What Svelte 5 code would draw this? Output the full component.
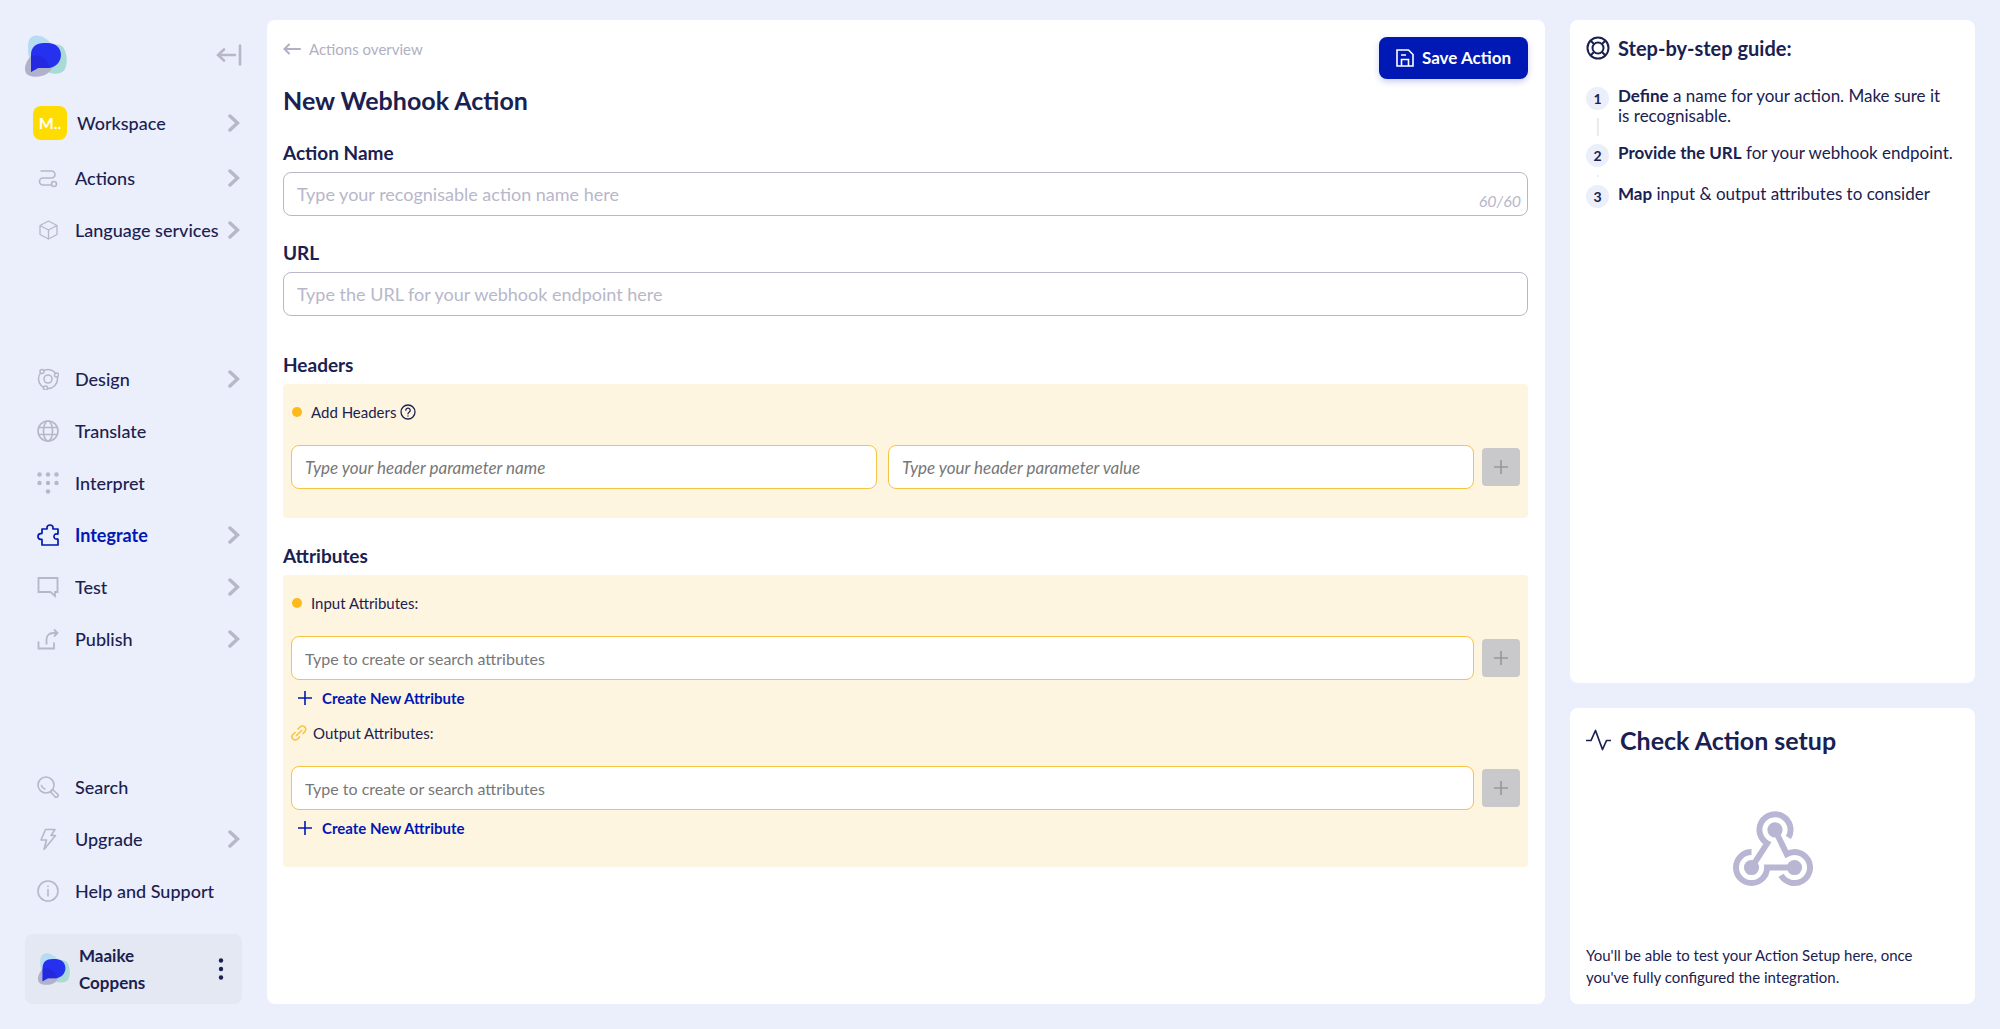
<script lang="ts">
	type NavItem = { label: string; icon: string; expandable?: boolean; active?: boolean };

	const topNav: NavItem[] = [
		{ label: "Actions", icon: "route", expandable: true },
		{ label: "Language services", icon: "cube", expandable: true },
	];
	const mainNav: NavItem[] = [
		{ label: "Design", icon: "orbit", expandable: true },
		{ label: "Translate", icon: "globe" },
		{ label: "Interpret", icon: "dots" },
		{ label: "Integrate", icon: "puzzle", expandable: true, active: true },
		{ label: "Test", icon: "chat", expandable: true },
		{ label: "Publish", icon: "share", expandable: true },
	];
	const bottomNav: NavItem[] = [
		{ label: "Search", icon: "search" },
		{ label: "Upgrade", icon: "bolt", expandable: true },
		{ label: "Help and Support", icon: "info" },
	];
	const steps = [
		{ strong: "Define", text: "a name for your action. Make sure it is\u00a0recognisable." },
		{ strong: "Provide the URL", text: "for your webhook endpoint." },
		{ strong: "Map", text: "input & output attributes to consider" },
	];

	const maxName = 60;
	let name = $state("");
	let url = $state("");
	let headerName = $state("");
	let headerValue = $state("");
	let inputAttr = $state("");
	let outputAttr = $state("");
	let remaining = $derived(maxName - name.length);
</script>

{#snippet logo(size: number)}
	<svg width={size} height={size} viewBox="0 0 42 42" aria-hidden="true">
		<path d="M3 11C3 3 8-1 15 1c8 2 15 10 13 18-2 7-20 10-24 3C3 19 3 15 3 11z" fill="#b5dcf2" />
		<path d="M22 14c3-5 12-6 16-2 4 5 5 16 2 22-2 5-12 6-17 3-5-4-5-17-1-23z" fill="#a9dad8" />
		<path d="M6 21c-4 4-8 12-5 17 3 5 16 5 22 0 5-4 6-11 3-14-4-4-15-7-20-3z" fill="#b0b1cb" />
		<path d="M6 37V20C6 12 11 8 19 8h4c8 0 13 5 13 12s-6 13-13 13H13z" fill="#2531ee" />
		<path d="M6 33V21c7-3 17 2 19 12H13l-7 4z" fill="#2424d6" opacity=".6" />
	</svg>
{/snippet}

{#snippet icon(kind: string)}
	<svg class="icon" width="22" height="22" viewBox="0 0 22 22" fill="none" stroke="currentColor" stroke-width="1.6" stroke-linejoin="round" stroke-linecap="round" aria-hidden="true">
		{#if kind === "route"}
			<path d="M4 4h10.500a3 3 0 0 1 0 7H6a3.500 3.500 0 0 0 0 7h8" />
			<circle cx="17" cy="17" r="2.5" />
		{:else if kind === "cube"}
			<path d="M11.500 2l8.500 4.500v9L11.500 20 3 15.500v-9zM3 6.500l8.500 4.500L20 6.500M11.500 11v9" stroke-width="1.3" />
		{:else if kind === "orbit"}
			<circle cx="11" cy="11" r="9.5" />
			<circle cx="11" cy="11" r="4" />
			<circle class="moon" cx="5" cy="3.5" r="2" />
			<circle class="moon" cx="19.5" cy="7" r="2" />
			<circle class="moon" cx="8.5" cy="20" r="2" />
		{:else if kind === "globe"}
			<circle cx="11" cy="11" r="10" />
			<ellipse cx="11" cy="11" rx="4.5" ry="10" />
			<path d="M2 7.500h18M2 14.500h18" />
		{:else if kind === "dots"}
			<g fill="currentColor" stroke="none">
				<circle cx="2.5" cy="2.5" r="2.2" /><circle cx="11" cy="2.5" r="2.2" /><circle cx="19.5" cy="2.5" r="2.2" />
				<circle cx="2.5" cy="11" r="2.2" /><circle cx="11" cy="11" r="2.2" /><circle cx="19.5" cy="11" r="2.2" />
				<circle cx="11" cy="19.5" r="2.2" />
			</g>
		{:else if kind === "puzzle"}
			<path d="M5 5h4.500c.8 0 .6-.6.5-1.200C9.800 2.300 11 1 13 1s3.200 1.300 3 2.800c-.1.600-.3 1.200.5 1.200H21v4.500c0 .7-.5.700-1.200.5-1.700-.3-2.800.8-2.800 2.500s1.100 2.800 2.800 2.500c.7-.1 1.200-.1 1.200.5v5.500H5v-5c0-.8-.5-.7-1.200-.7C2 15.300 1 14.200 1 12.500s1-2.800 2.800-2.800c.700 0 1.200 0 1.200-.700z" stroke-width="1.7" />
		{:else if kind === "chat"}
			<path d="M1.500 2h19v14H18v4l-4.500-4h-12z" stroke-width="1.8" stroke-linejoin="miter" />
		{:else if kind === "share"}
			<path d="M1.500 13.500v7H17v-6M9.500 16.500V12c0-4 2-7 7-7h4M17 1.500L20.500 5 17 8.500" stroke-width="1.8" stroke-linecap="butt" stroke-linejoin="miter" />
		{:else if kind === "search"}
			<circle cx="9" cy="9" r="8" />
			<path d="M4.500 9.500A4.800 4.800 0 0 0 8 13" />
			<path d="M15.500 13.500l5 4.500a1.800 1.800 0 0 1-2.500 2.700l-4.500-5z" />
		{:else if kind === "bolt"}
			<path d="M8.500 1.500H18l-4 6h4.500L7 21.500l2.500-9.500H4z" />
		{:else if kind === "info"}
			<circle cx="11" cy="11" r="10" />
			<path d="M11 9.500V16M11 6v.5" />
		{/if}
	</svg>
{/snippet}

{#snippet chevron()}
	<svg class="chevron" width="12" height="18" viewBox="0 0 12 18" fill="none" stroke="currentColor" stroke-width="3.5" aria-hidden="true">
		<path d="M2 2l7.500 7L2 16" stroke-linecap="round" />
	</svg>
{/snippet}

{#snippet plus(size: number)}
	<svg width={size} height={size} viewBox="0 0 16 16" fill="none" stroke="currentColor" stroke-width="1.6" aria-hidden="true">
		<path d="M8 1v14M1 8h14" />
	</svg>
{/snippet}

{#snippet navList(items: NavItem[])}
	{#each items as item}
		<a class="nav-item" class:active={item.active} href="#{item.icon}">
			{@render icon(item.icon)}
			<span class="nav-label">{item.label}</span>
			{#if item.expandable}{@render chevron()}{/if}
		</a>
	{/each}
{/snippet}

<div class="app">
	<aside class="sidebar">
		<div class="brand">
			{@render logo(42)}
			<button class="collapse" aria-label="Collapse menu">
				<svg width="26" height="22" viewBox="0 0 26 22" fill="none" stroke="currentColor" stroke-width="2.6" stroke-linecap="round" aria-hidden="true">
					<path d="M19 11H2M8 5.500L2 11l6 5.500M24 1.500v19" />
				</svg>
			</button>
		</div>
		<nav class="nav-group">
			<a class="nav-item workspace" href="#workspace">
				<span class="badge">M..</span>
				<span class="nav-label">Workspace</span>
				{@render chevron()}
			</a>
			{@render navList(topNav)}
		</nav>
		<nav class="nav-group spaced">{@render navList(mainNav)}</nav>
		<nav class="nav-group spaced">{@render navList(bottomNav)}</nav>
		<div class="profile">
			{@render logo(32)}
			<span class="profile-name">Maaike Coppens</span>
			<button class="more" aria-label="Account menu">
				<svg width="6" height="22" viewBox="0 0 6 22" fill="currentColor" aria-hidden="true">
					<circle cx="3" cy="2.5" r="2.2" /><circle cx="3" cy="11" r="2.2" /><circle cx="3" cy="19.5" r="2.2" />
				</svg>
			</button>
		</div>
	</aside>

	<main class="card editor">
		<header class="editor-head">
			<div>
				<a class="back" href="#actions">
					<svg width="18" height="12" viewBox="0 0 18 12" fill="none" stroke="currentColor" stroke-width="2" stroke-linecap="round" aria-hidden="true">
						<path d="M17 6H2M6 1.500L1.500 6 6 10.500" />
					</svg>
					Actions overview
				</a>
				<h1>New Webhook Action</h1>
			</div>
			<button class="save">
				<svg width="18" height="18" viewBox="0 0 18 18" fill="none" stroke="currentColor" stroke-width="1.6" aria-hidden="true">
					<path d="M1 1h11.500L17 5.500V17H1zM5.500 17v-6.500h7V17M5 6h5" />
				</svg>
				Save Action
			</button>
		</header>

		<div class="field">
			<label for="action-name">Action Name</label>
			<div class="counted">
				<input id="action-name" class="text-input" maxlength={maxName} placeholder="Type your recognisable action name here" bind:value={name} />
				<span class="counter">{remaining}/{maxName}</span>
			</div>
		</div>
		<div class="field">
			<label for="action-url">URL</label>
			<input id="action-url" class="text-input" placeholder="Type the URL for your webhook endpoint here" bind:value={url} />
		</div>

		<section class="group headers">
			<h2>Headers</h2>
			<div class="panel">
				<div class="panel-label">
					<span class="dot"></span>
					<span>Add Headers</span>
					<svg class="help" width="16" height="16" viewBox="0 0 16 16" fill="none" stroke="currentColor" stroke-width="1.3" stroke-linecap="round" aria-hidden="true">
						<circle cx="8" cy="8" r="7" />
						<path d="M5.800 6.300a2.200 2.200 0 1 1 3.300 1.900C8.300 8.700 8 9 8 9.800M8 12v.1" />
					</svg>
				</div>
				<div class="row">
					<div class="pair">
						<input class="text-input amber slanted" aria-label="Header name" placeholder="Type your header parameter name" bind:value={headerName} />
						<input class="text-input amber slanted" aria-label="Header value" placeholder="Type your header parameter value" bind:value={headerValue} />
					</div>
					<button class="add" aria-label="Add header" disabled>{@render plus(16)}</button>
				</div>
			</div>
		</section>

		<section class="group">
			<h2>Attributes</h2>
			<div class="panel">
				<label class="panel-label" for="input-attr">
					<span class="dot"></span>
					<span>Input Attributes:</span>
				</label>
				<div class="row">
					<input id="input-attr" class="text-input amber" placeholder="Type to create or search attributes" bind:value={inputAttr} />
					<button class="add" aria-label="Add input attribute" disabled>{@render plus(16)}</button>
				</div>
				<button class="create">{@render plus(16)}Create New Attribute</button>
				<label class="panel-label output" for="output-attr">
					<svg width="16" height="16" viewBox="0 0 16 16" fill="none" stroke="#f8c646" stroke-width="1.7" stroke-linecap="round" aria-hidden="true">
						<path d="M5.500 10.500l5-5M7 4l2-2a3.200 3.200 0 0 1 4.800 4.600L12 8.500M4 7.500L2 9.500A3.200 3.200 0 0 0 6.600 14L8.500 12" />
					</svg>
					<span>Output Attributes:</span>
				</label>
				<div class="row">
					<input id="output-attr" class="text-input amber" placeholder="Type to create or search attributes" bind:value={outputAttr} />
					<button class="add" aria-label="Add output attribute" disabled>{@render plus(16)}</button>
				</div>
				<button class="create">{@render plus(16)}Create New Attribute</button>
			</div>
		</section>
	</main>

	<div class="side">
		<section class="card guide">
			<h2>
				<svg width="24" height="24" viewBox="0 0 24 24" fill="none" stroke="currentColor" stroke-width="2" aria-hidden="true">
					<circle cx="12" cy="12" r="10.5" /><circle cx="12" cy="12" r="5.5" />
					<path d="M4.500 4.500L8 8M19.500 4.500L16 8M4.500 19.500L8 16M19.500 19.500L16 16" />
				</svg>
				Step-by-step guide:
			</h2>
			<ol>
				{#each steps as step, i}
					<li>
						<div class="rail">
							<span class="num">{i + 1}</span>
							{#if i < steps.length - 1}<span class="line"></span>{/if}
						</div>
						<p><strong>{step.strong}</strong> {step.text}</p>
					</li>
				{/each}
			</ol>
		</section>
		<section class="card check">
			<h2>
				<svg width="26" height="22" viewBox="0 0 26 22" fill="none" stroke="currentColor" stroke-width="1.7" stroke-linejoin="round" aria-hidden="true">
					<path d="M0 11.500h5L9.500 1.500l7 19 4-9H25" />
				</svg>
				Check Action setup
			</h2>
			<svg class="webhook" width="80" height="76" viewBox="35 35 242 228" fill="none" stroke="currentColor" stroke-width="18" aria-hidden="true">
				<path d="M202.700 114.500A47 47 0 1 0 138.500 131.700L91 205M91 158A47 47 0 1 0 138 205H221M180.300 228.500A47 47 0 1 0 197.500 164.300L162 91" />
				<g fill="currentColor" stroke="none">
					<circle cx="162" cy="91" r="23" /><circle cx="91" cy="205" r="23" /><circle cx="221" cy="205" r="23" />
				</g>
			</svg>
			<p>You'll be able to test your Action Setup here, once you've&nbsp;fully configured the integration.</p>
		</section>
	</div>
</div>

<style>
	:global(body) {
		margin: 0;
		background: #ebeefb;
	}
	.app {
		--navy: #1a2151;
		--blue: #0018b4;
		--muted: #b8b7ca;
		box-sizing: border-box;
		min-height: 100vh;
		display: grid;
		grid-template-columns: 242px minmax(0, 1fr) 405px;
		column-gap: 25px;
		padding: 20px 25px 25px 0;
		font-family: Lato, "Open Sans", sans-serif;
		font-size: 18px;
		line-height: 20px;
		color: var(--navy);
	}
	h1,
	h2,
	p,
	ol {
		margin: 0;
		padding: 0;
	}
	button,
	input {
		font: inherit;
		color: inherit;
	}
	button {
		border: none;
		background: none;
		padding: 0;
		cursor: pointer;
	}
	.card {
		background: #fff;
		border-radius: 8px;
	}

	.sidebar {
		display: flex;
		flex-direction: column;
		padding-left: 25px;
	}
	.brand {
		display: flex;
		justify-content: space-between;
		align-items: flex-start;
		padding: 15px 0 17px;
	}
	.collapse {
		display: flex;
		padding-top: 9px;
		color: var(--muted);
	}
	.spaced {
		margin-top: auto;
	}
	.nav-item {
		display: flex;
		align-items: center;
		height: 52px;
		padding: 0 2px 0 12px;
		color: var(--navy);
		text-decoration: none;
		font-weight: 500;
		white-space: nowrap;
	}
	.nav-item.workspace {
		height: 58px;
		padding-left: 8px;
	}
	.icon,
	.chevron {
		flex-shrink: 0;
		color: var(--muted);
	}
	.nav-item.active,
	.active .icon {
		color: var(--blue);
		font-weight: 700;
	}
	.moon {
		fill: #ebeefb;
	}
	.chevron {
		margin-left: auto;
	}
	.nav-label {
		margin-left: 16px;
	}
	.workspace .nav-label {
		margin-left: 10px;
	}
	.badge {
		width: 34px;
		height: 34px;
		border-radius: 8px;
		background: #ffdc00;
		color: #fff;
		font-size: 16px;
		font-weight: 700;
		line-height: 34px;
		text-align: center;
	}
	.profile {
		display: flex;
		align-items: center;
		margin-top: 17px;
		height: 70px;
		padding: 0 18px 0 13px;
		border-radius: 8px;
		background: #e4e8f2;
	}
	.profile-name {
		flex: 1;
		max-width: 90px;
		margin-left: 9px;
		font-size: 17px;
		font-weight: 700;
		line-height: 27px;
	}
	.more {
		display: flex;
		margin-left: auto;
	}

	.editor {
		padding: 17px 17px 32px 16px;
	}
	.editor-head {
		display: flex;
		justify-content: space-between;
		align-items: flex-start;
	}
	.back {
		display: flex;
		align-items: center;
		gap: 8px;
		margin-top: 2px;
		color: #b0afc3;
		font-size: 15px;
		text-decoration: none;
	}
	h1 {
		margin-top: 26px;
		font-size: 25px;
		line-height: 31px;
	}
	.save {
		display: flex;
		align-items: center;
		justify-content: center;
		gap: 8px;
		width: 149px;
		height: 42px;
		border-radius: 8px;
		background: var(--blue);
		box-shadow: 0 3px 6px rgba(0, 24, 180, 0.2);
		color: #fff;
		font-size: 17px;
		font-weight: 700;
	}
	.field {
		margin-top: 28px;
	}
	.field label,
	.group h2 {
		display: block;
		margin-bottom: 10px;
		font-size: 19px;
		font-weight: 700;
		line-height: 18px;
	}
	.text-input {
		display: block;
		box-sizing: border-box;
		width: 100%;
		min-width: 0;
		height: 44px;
		padding: 0 13px;
		border: 1px solid var(--muted);
		border-radius: 8px;
		background: #fff;
		outline: none;
	}
	.text-input::placeholder {
		color: #b8b7ca;
		opacity: 1;
	}
	.text-input.amber {
		border-color: #f6c445;
		font-size: 16px;
	}
	.text-input.amber::placeholder {
		color: #777;
	}
	.text-input.slanted {
		font-size: 17px;
	}
	.slanted::placeholder {
		font-style: italic;
	}
	.counted {
		position: relative;
	}
	.counter {
		position: absolute;
		right: 7px;
		bottom: 5px;
		color: var(--muted);
		font-size: 16px;
		font-style: italic;
	}
	.group {
		margin-top: 29px;
	}
	.group.headers {
		margin-top: 40px;
	}
	.panel {
		padding: 18px 8px 29px;
		border-radius: 4px;
		background: #fef5e0;
		font-size: 15px;
	}
	.panel-label {
		display: flex;
		align-items: center;
		gap: 9px;
		margin-bottom: 23px;
	}
	.panel-label.output {
		gap: 6px;
		margin-top: 15px;
	}
	.dot {
		width: 10px;
		height: 10px;
		margin-left: 1px;
		border-radius: 50%;
		background: #fdba1b;
	}
	.help {
		margin-left: -5px;
	}
	.row {
		display: flex;
		align-items: center;
		gap: 8px;
	}
	.pair {
		flex: 1;
		display: flex;
		gap: 11px;
	}
	.add {
		display: flex;
		flex-shrink: 0;
		align-items: center;
		justify-content: center;
		width: 38px;
		height: 38px;
		border-radius: 4px;
		background: #c9c8cb;
		color: #98979a;
	}
	.create {
		display: flex;
		align-items: center;
		gap: 9px;
		height: 20px;
		margin: 8px 0 0 6px;
		color: var(--blue);
		font-weight: 700;
	}

	.side {
		display: flex;
		flex-direction: column;
		gap: 25px;
	}
	.guide {
		flex: 1;
		padding: 16px;
	}
	.guide h2,
	.check h2 {
		display: flex;
		align-items: center;
		gap: 8px;
		font-size: 20px;
		line-height: 24px;
	}
	.guide ol {
		margin-top: 26px;
		list-style: none;
	}
	.guide li {
		display: flex;
		gap: 9px;
	}
	.guide p {
		padding-bottom: 17px;
		font-size: 17px;
	}
	.rail {
		display: flex;
		flex-direction: column;
		flex-shrink: 0;
		align-items: center;
		width: 23px;
	}
	.num {
		width: 23px;
		height: 23px;
		margin-top: 1px;
		border-radius: 50%;
		background: #ebeefb;
		font-size: 14px;
		font-weight: 700;
		line-height: 23px;
		text-align: center;
	}
	.line {
		flex: 1;
		width: 2px;
		min-height: 2px;
		margin: 8px 0 7px;
		background: #eaeaf0;
	}
	.check {
		padding: 18px 16px 16px;
	}
	.check h2 {
		font-size: 25px;
		line-height: 28px;
	}
	.webhook {
		display: block;
		margin: 57px auto;
		color: #b8b6d2;
	}
	.check p {
		font-size: 15px;
		line-height: 22px;
	}
</style>
